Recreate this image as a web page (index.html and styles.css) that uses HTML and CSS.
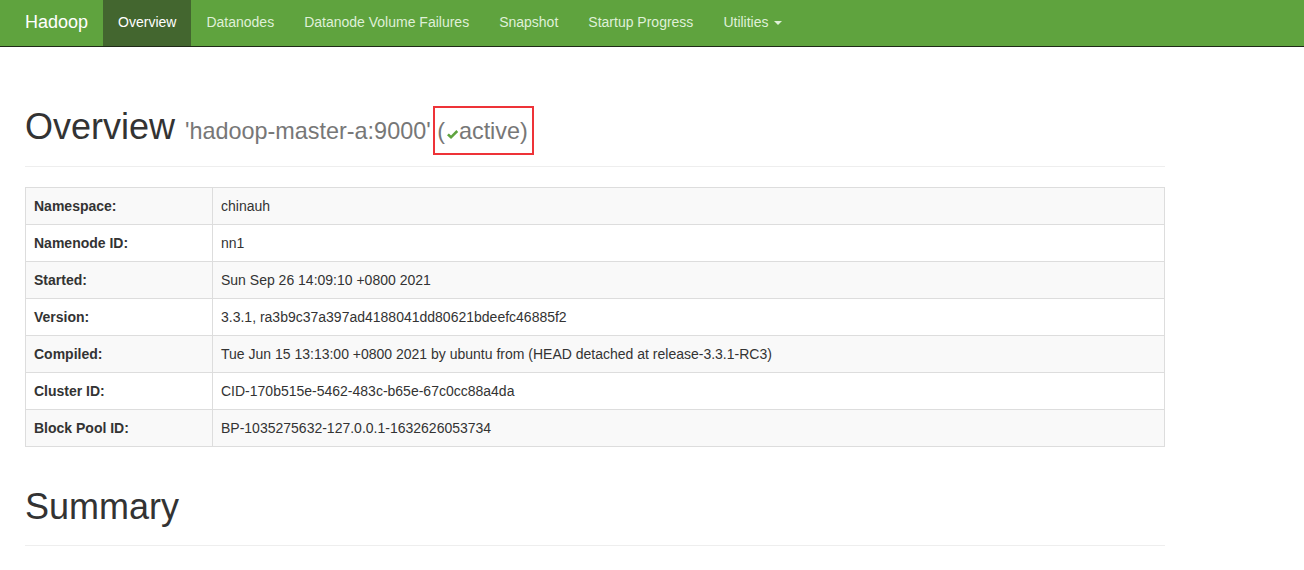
FILE: index.html
```html
<!DOCTYPE html>
<html>
<head>
<meta charset="utf-8">
<title>Namenode information</title>
<link rel="stylesheet" href="styles.css">
</head>
<body>
<header class="navbar">
  <div class="nav-inner">
    <a class="brand" href="#">Hadoop</a>
    <ul class="nav">
      <li class="active"><a href="#">Overview</a></li>
      <li><a href="#">Datanodes</a></li>
      <li><a href="#">Datanode Volume Failures</a></li>
      <li><a href="#">Snapshot</a></li>
      <li><a href="#">Startup Progress</a></li>
      <li><a href="#">Utilities <span class="caret"></span></a></li>
    </ul>
  </div>
</header>
<main class="container">
  <div class="page-header">
    <h1>Overview <small>'hadoop-master-a:9000' <span class="state">(<svg class="ok" viewBox="0 0 14 12" width="13" height="11"><path d="M1 6.8 L3 4.8 L5.4 7.2 L11.2 1.2 L13.2 3.2 L5.4 11 Z" fill="#5fa33e"/></svg>active)</span></small></h1>
  </div>
  <table class="info">
    <tr><th>Namespace:</th><td>chinauh</td></tr>
    <tr><th>Namenode ID:</th><td>nn1</td></tr>
    <tr><th>Started:</th><td>Sun Sep 26 14:09:10 +0800 2021</td></tr>
    <tr><th>Version:</th><td>3.3.1, ra3b9c37a397ad4188041dd80621bdeefc46885f2</td></tr>
    <tr><th>Compiled:</th><td>Tue Jun 15 13:13:00 +0800 2021 by ubuntu from (HEAD detached at release-3.3.1-RC3)</td></tr>
    <tr><th>Cluster ID:</th><td>CID-170b515e-5462-483c-b65e-67c0cc88a4da</td></tr>
    <tr><th>Block Pool ID:</th><td>BP-1035275632-127.0.0.1-1632626053734</td></tr>
  </table>
  <div class="page-header">
    <h1>Summary</h1>
  </div>
</main>
</body>
</html>
```
FILE: styles.css
```css
* { box-sizing: border-box; }
html, body { margin: 0; padding: 0; }
body {
  font-family: "Liberation Sans", Arial, Helvetica, sans-serif;
  font-size: 14px;
  line-height: 1.42857;
  color: #333;
  background: #fff;
}
a { text-decoration: none; }

.navbar {
  height: 47px;
  background: #5fa33e;
  border-bottom: 1px solid #1f2a18;
}
.nav-inner {
  display: flex;
  align-items: stretch;
  height: 46px;
  padding-left: 10px;
}
.brand {
  display: block;
  padding: 12px 15px 14px;
  font-size: 18px;
  line-height: 20px;
  color: #fff;
}
.nav {
  display: flex;
  list-style: none;
  margin: 0;
  padding: 0;
}
.nav li a {
  display: block;
  padding: 12px 15px 14px;
  line-height: 20px;
  height: 46px;
  color: #dff0d8;
}
.nav li.active a {
  background: #43662f;
  color: #fff;
}
.caret {
  display: inline-block;
  width: 0;
  height: 0;
  margin-left: 2px;
  vertical-align: middle;
  border-top: 4px solid #dff0d8;
  border-left: 4px solid transparent;
  border-right: 4px solid transparent;
}

.container {
  width: 1170px;
  margin-left: 10px;
  padding: 20px 15px 0;
}
.page-header {
  margin: 40px 0 20px;
  padding-bottom: 9px;
  border-bottom: 1px solid #eee;
}
.page-header h1 {
  margin: 0 0 10px;
  font-size: 36px;
  font-weight: 500;
  line-height: 1.1;
  color: #333;
}
.page-header h1 small {
  font-size: 65%;
  font-weight: normal;
  color: #777;
}
.state {
  position: relative;
}
.state::after {
  content: "";
  position: absolute;
  left: -4px;
  right: -6px;
  top: -12px;
  bottom: -11px;
  border: 2px solid #ee3338;
}
.ok {
  display: inline-block;
  vertical-align: -1px;
  margin: 0 0 0 1px;
}

.info {
  width: 100%;
  border-collapse: collapse;
  border: 1px solid #ddd;
  margin-bottom: 20px;
}
.info th, .info td {
  padding: 8px;
  line-height: 20px;
  border: 1px solid #ddd;
  text-align: left;
  vertical-align: top;
}
.info th {
  width: 187px;
  font-weight: bold;
}
.info tr:nth-child(odd) { background: #f9f9f9; }
```
